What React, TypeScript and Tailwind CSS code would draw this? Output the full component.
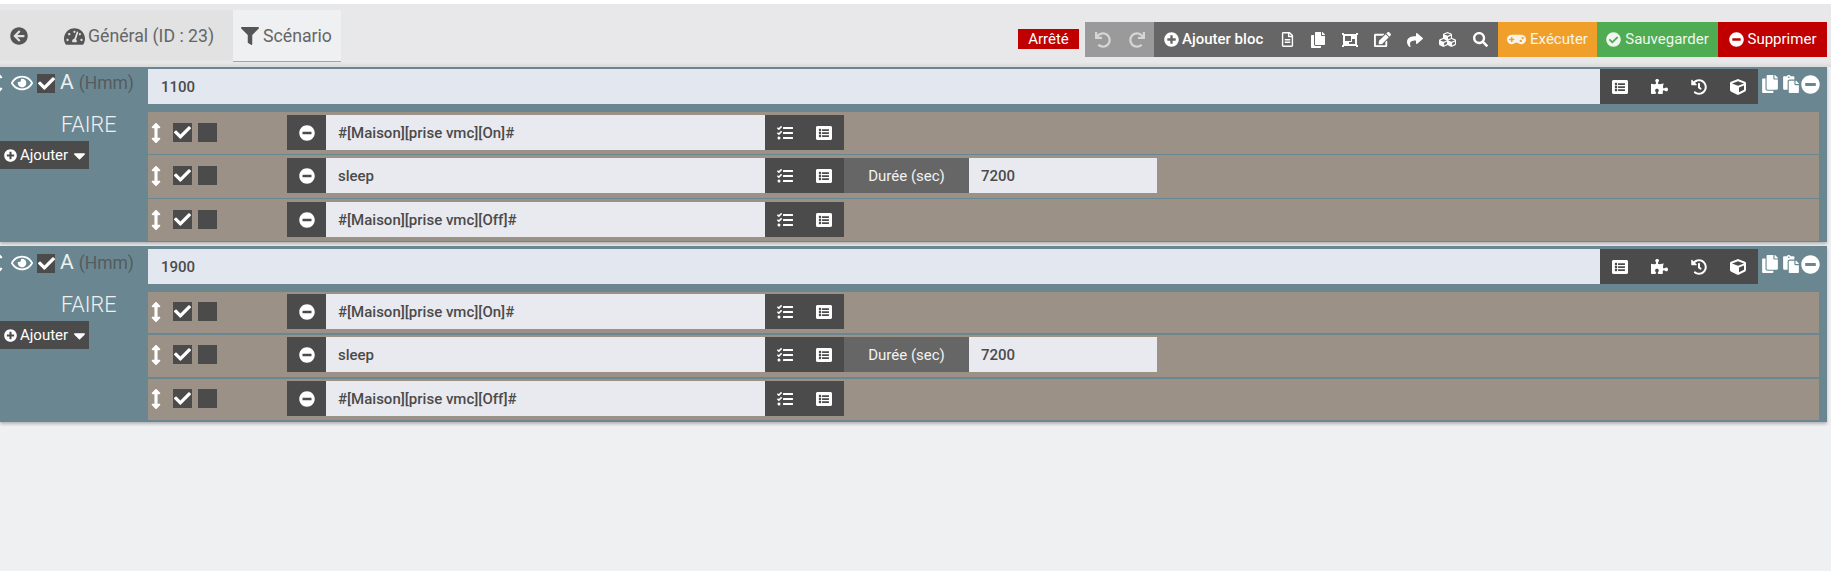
import type { ReactNode } from 'react'
import {
  FaArrowCircleLeft,
  FaArrowsAltV,
  FaCaretDown,
  FaCheck,
  FaCheckCircle,
  FaCopy,
  FaCube,
  FaCubes,
  FaEdit,
  FaFilter,
  FaGamepad,
  FaHistory,
  FaListAlt,
  FaMinusCircle,
  FaObjectGroup,
  FaPaste,
  FaPlusCircle,
  FaPuzzlePiece,
  FaRedo,
  FaRegEye,
  FaRegFileAlt,
  FaSearch,
  FaShare,
  FaTachometerAlt,
  FaTasks,
  FaUndo,
} from 'react-icons/fa'

type Action = { text: string; duration?: string }

const actions: Action[] = [
  { text: '#[Maison][prise vmc][On]#' },
  { text: 'sleep', duration: '7200' },
  { text: '#[Maison][prise vmc][Off]#' },
]

const scenarios = [
  { value: '1100', rowHeights: ['h-[42px]', 'h-[43px]', 'h-[42px]'], gap: 'gap-[1px]', pad: 'pt-[3px]', top: 'pt-[3px]' },
  { value: '1900', rowHeights: ['h-[41px]', 'h-[42px]', 'h-[41px]'], gap: 'gap-[2px]', pad: 'pt-[2px]', top: 'pt-[3px]' },
]

function ToolIcon({ children, className = 'w-[33px]' }: { children: ReactNode; className?: string }) {
  return <span className={`flex items-center justify-center h-full ${className}`}>{children}</span>
}

function ActionRow({ action, height, pad }: { action: Action; height: string; pad: string }) {
  return (
    <div className={`flex items-start bg-[#9b9187] ${height} ${pad}`}>
      <div className="flex items-center h-[35px]">
        <FaArrowsAltV className="text-white text-[20px] w-[16px] ml-[0px]" />
        <span className="flex items-center justify-center w-[19px] h-[19px] ml-[9px] bg-[#4b4b4b]">
          <FaCheck className="text-white text-[17px]" />
        </span>
        <span className="w-[19px] h-[19px] ml-[6px] bg-[#4b4b4b]" />
      </div>
      <span className="flex items-center justify-center w-[39px] h-[35px] ml-[70px] bg-[#4b4b4b]">
        <FaMinusCircle className="text-white text-[16px]" />
      </span>
      <div className="flex items-center w-[439px] h-[35px] pl-[12px] pt-[1px] bg-[#e9eaef] text-[15px] font-medium text-[#4b4b4b]">
        {action.text}
      </div>
      <div className="flex items-center w-[79px] h-[35px] bg-[#4b4b4b] text-white">
        <ToolIcon className="w-[40px]"><FaTasks className="text-[16px]" /></ToolIcon>
        <ToolIcon className="w-[38px]"><FaListAlt className="text-[16px]" /></ToolIcon>
      </div>
      {action.duration && (
        <>
          <div className="flex items-center justify-center w-[125px] h-[35px] pt-[1px] bg-[#666666] text-[15px] text-[#f2f2f2]">
            Durée (sec)
          </div>
          <div className="flex items-center w-[188px] h-[35px] pl-[12px] pt-[1px] bg-[#e9eaef] text-[15px] font-medium text-[#4b4b4b]">
            {action.duration}
          </div>
        </>
      )}
    </div>
  )
}

function ScenarioBlock({ value, rowHeights, gap, pad, top }: (typeof scenarios)[number]) {
  return (
    <div className={`flex w-[1827px] h-[176px] bg-[#6a8791] shadow-[0_2px_3px_rgba(0,0,0,0.25)] ${top}`}>
      <div className="w-[148px] shrink-0">
        <div className="flex items-center h-[26px] mt-[1px] overflow-hidden">
          <FaArrowsAltV className="text-white text-[20px] w-[16px] ml-[-10px] shrink-0" />
          <FaRegEye className="text-white text-[22px] ml-[5px] shrink-0" />
          <span className="flex items-center justify-center w-[18px] h-[19px] ml-[4px] bg-[#4b4b4b] shrink-0">
            <FaCheck className="text-white text-[17px]" />
          </span>
          <span className="ml-[5px] text-[21px] text-[#eef0f2] whitespace-nowrap">A</span>
          <span className="ml-[5px] text-[17.5px] text-[#555b5f] whitespace-nowrap">(Hmm)</span>
        </div>
        <div className="mt-[16px] pl-[61px] text-[21.5px] leading-[26px] font-light text-[#eef0f2]">FAIRE</div>
        <div className="flex items-center w-[89px] h-[28px] mt-[3px] pl-[4px] bg-[#4b4b4b] text-[15px] text-white">
          <FaPlusCircle className="text-[13px] mr-[3px] shrink-0" />
          Ajouter
          <FaCaretDown className="text-[19px] ml-[2px] shrink-0" />
        </div>
      </div>
      <div className="flex-1">
        <div className="flex h-[35px]">
          <div className="flex flex-1 items-center pl-[13px] pt-[1px] bg-[#e3e7f0] text-[15px] font-medium text-[#4b4b4b]">
            {value}
          </div>
          <div className="flex items-center w-[158px] bg-[#4b4b4b] text-white">
            <ToolIcon className="w-[39.5px]"><FaListAlt className="text-[16px]" /></ToolIcon>
            <ToolIcon className="w-[39.5px]"><FaPuzzlePiece className="text-[17px]" /></ToolIcon>
            <ToolIcon className="w-[39.5px]"><FaHistory className="text-[16px]" /></ToolIcon>
            <ToolIcon className="w-[39.5px]"><FaCube className="text-[16px]" /></ToolIcon>
          </div>
          <div className="flex items-start w-[69px] pt-[6px] pl-[3px] text-white">
            <FaCopy className="text-[18px] shrink-0" />
            <FaPaste className="text-[18px] ml-[3px] shrink-0" />
            <FaMinusCircle className="text-[19px] ml-[1px] shrink-0" />
          </div>
        </div>
        <div className={`flex flex-col mt-[8px] mr-[8px] ${gap}`}>
          {actions.map((action, i) => (
            <ActionRow key={action.text} action={action} height={rowHeights[i]} pad={pad} />
          ))}
        </div>
      </div>
    </div>
  )
}

export default function App() {
  return (
    <div className="min-h-[571px] bg-[#eff0f2] font-['Roboto',sans-serif]">
      <div className="h-[4px] bg-white" />
      <header className="relative z-10 h-[63px] bg-[#e8e8ea]">
        <div className="flex h-[58px] pt-[6px]">
          <nav className="flex h-[52px]">
            <div className="flex items-center w-[233px] h-[51px] pt-[1px] bg-[#e1e2e1] text-[17.7px] text-[#666666]">
              <FaArrowCircleLeft className="text-[18px] ml-[10px] text-[#555555]" />
              <FaTachometerAlt className="text-[21px] ml-[36px] text-[#555555]" />
              <span className="ml-[3px]">Général (ID : 23)</span>
            </div>
            <div className="flex items-center w-[108px] h-[52px] pt-[1px] bg-[#eff0f2] border-b border-[#93c13e] text-[17.7px] text-[#666666]">
              <FaFilter className="text-[18px] ml-[8px] text-[#555555]" />
              <span className="ml-[4px]">Scénario</span>
            </div>
          </nav>
          <div className="flex flex-1 items-start justify-end pt-[12px] pr-[4px]">
            <span className="flex items-center justify-center w-[61px] h-[20px] mt-[7px] mr-[6px] bg-[#c00000] text-[15px] text-white">
              Arrêté
            </span>
            <div className="flex h-[35px]">
              <div className="flex items-center w-[69px] bg-[#9a9a9a] text-[#d6d6d6]">
                <ToolIcon className="w-[35px]"><FaUndo className="text-[16px]" /></ToolIcon>
                <ToolIcon className="w-[34px]"><FaRedo className="text-[16px]" /></ToolIcon>
              </div>
              <div className="flex items-center w-[344px] bg-[#666666] text-[15px] font-medium text-white">
                <FaPlusCircle className="text-[15px] ml-[10px] mr-[3px] shrink-0" />
                <span className="whitespace-nowrap">Ajouter bloc</span>
                <ToolIcon className="w-[30px] ml-[9px]"><FaRegFileAlt className="text-[15px]" /></ToolIcon>
                <ToolIcon className="w-[32px]"><FaCopy className="text-[16px]" /></ToolIcon>
                <ToolIcon className="w-[31px]"><FaObjectGroup className="text-[16px]" /></ToolIcon>
                <ToolIcon className="w-[34px]"><FaEdit className="text-[17px]" /></ToolIcon>
                <ToolIcon className="w-[32px]"><FaShare className="text-[16px]" /></ToolIcon>
                <ToolIcon className="w-[33px]"><FaCubes className="text-[17px]" /></ToolIcon>
                <ToolIcon className="w-[32px]"><FaSearch className="text-[15px]" /></ToolIcon>
              </div>
              <div className="flex items-center justify-center gap-[4px] w-[99px] bg-[#f0a02a] text-[15px] text-[#f8f4ec]">
                <FaGamepad className="text-[19px]" />
                Exécuter
              </div>
              <div className="flex items-center justify-center gap-[4px] w-[121px] bg-[#4fac53] text-[15px] text-[#f2f6f0]">
                <FaCheckCircle className="text-[15px]" />
                Sauvegarder
              </div>
              <div className="flex items-center justify-center gap-[4px] w-[109px] bg-[#c00000] text-[15px] text-white">
                <FaMinusCircle className="text-[15px]" />
                Supprimer
              </div>
            </div>
          </div>
        </div>
        <div className="h-[5px] bg-gradient-to-b from-[#e8e8ea] to-[#dadada]" />
      </header>
      <div className="mt-[-1px] flex flex-col gap-[4px]">
        {scenarios.map((scenario) => (
          <ScenarioBlock key={scenario.value} {...scenario} />
        ))}
      </div>
    </div>
  )
}
